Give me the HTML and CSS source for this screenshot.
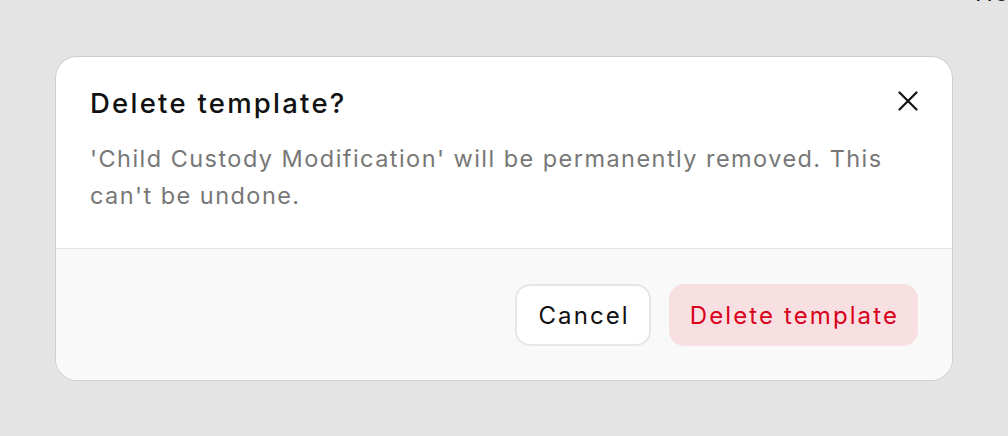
FILE: index.html
```html
<!DOCTYPE html>
<html lang="en">
<head>
    <meta charset="UTF-8">
    <meta name="viewport" content="width=device-width, initial-scale=1.0">
    <title>Delete template</title>
    <link rel="stylesheet" href="styles.css">
</head>
<body>
    <div class="behind">Home</div>

    <div class="dialog">
        <div class="dialog-header">
            <div class="dialog-text">
                <h2>Delete template?</h2>
                <p>'Child Custody Modification' will be permanently removed. This can't be undone.</p>
            </div>
            <button class="close" aria-label="Close">
                <svg width="20" height="20" viewBox="0 0 20 20" fill="none" stroke="#111" stroke-width="2.2" stroke-linecap="round">
                    <path d="M1.5 1.5 L18.5 18.5 M18.5 1.5 L1.5 18.5"/>
                </svg>
            </button>
        </div>
        <div class="dialog-footer">
            <button class="btn btn-cancel">Cancel</button>
            <button class="btn btn-danger">Delete template</button>
        </div>
    </div>
</body>
</html>
```

FILE: styles.css
```css
body {
    font-family: Inter, "Noto Sans", sans-serif;
    margin: 0;
    padding: 56px 0 0 55px;
    background-color: #e4e4e4;
    overflow: hidden;
    height: 436px;
    box-sizing: border-box;
}

/* page text showing through under the overlay */
.behind {
    position: absolute;
    top: -22px;
    left: 975px;
    font-size: 24px;
    letter-spacing: 1.5px;
    color: #111;
}

.dialog {
    width: 898px;
    background: white;
    border: 1px solid #cdcdcd;
    border-radius: 22px;
    box-sizing: border-box;
    overflow: hidden;
}
.dialog-header {
    display: flex;
    justify-content: space-between;
    align-items: flex-start;
    padding: 28px 34px 34px 34px;
    border-bottom: 1px solid #e3e3e3;
}
.dialog-text h2 {
    margin: 0;
    font-size: 27.5px;
    font-weight: 500;
    letter-spacing: 2.25px;
    color: #111;
    line-height: 36px;
}
.dialog-text p {
    margin: 19px 0 0 0;
    font-size: 23.5px;
    letter-spacing: 1.45px;
    line-height: 37px;
    color: #777;
    max-width: 830px;
}
.close {
    border: none;
    background: none;
    padding: 0;
    margin: 6px 0 0 0;
    cursor: pointer;
    line-height: 0;
}
.dialog-footer {
    display: flex;
    justify-content: flex-end;
    gap: 18px;
    background: #f9f9f9;
    padding: 35px 34px 34px;
}
.btn {
    height: 62px;
    font-family: inherit;
    font-size: 24px;
    letter-spacing: 2.1px;
    padding: 0 19px 0 21px;
    border-radius: 15px;
    cursor: pointer;
}
.btn-cancel {
    background: white;
    color: #111;
    border: 2px solid #e6e6e6;
}
.btn-danger {
    background: #f8e0e2;
    color: #d9001b;
    border: none;
}
```
